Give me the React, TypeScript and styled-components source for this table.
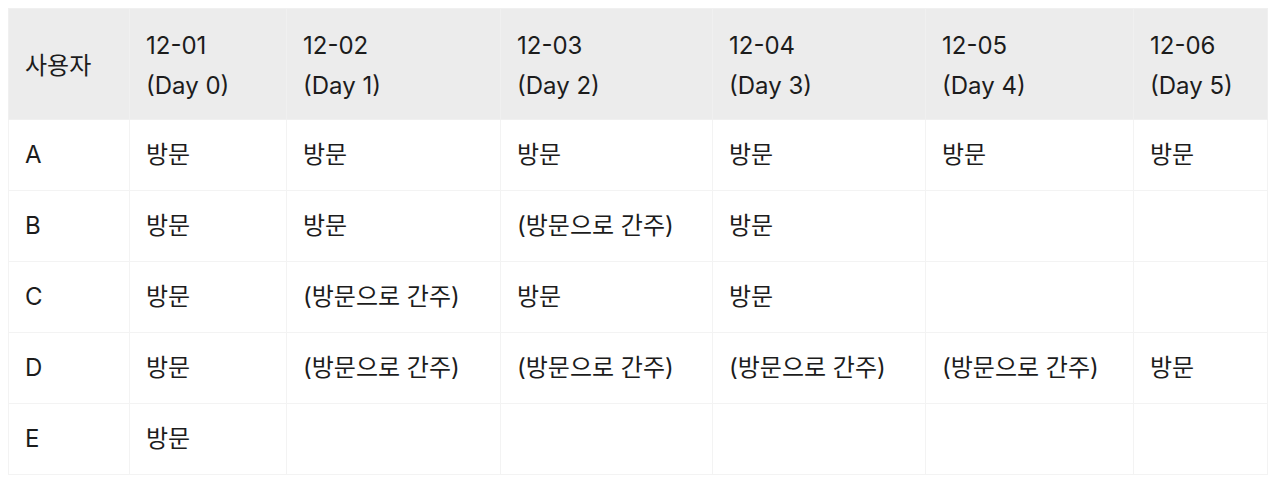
import React from 'react';
import styled, { createGlobalStyle } from 'styled-components';

const GlobalStyle = createGlobalStyle`
  body {
    margin: 8px;
    background: #ffffff;
    font-family: Inter, 'Noto Sans CJK KR', 'Noto Sans', sans-serif;
    color: #1c1c1c;
  }
`;

const columns = [121, 157, 214, 212, 213, 208, 134];

const headers = [
  ['사용자'],
  ['12-01', '(Day 0)'],
  ['12-02', '(Day 1)'],
  ['12-03', '(Day 2)'],
  ['12-04', '(Day 3)'],
  ['12-05', '(Day 4)'],
  ['12-06', '(Day 5)'],
];

const V = '방문';
const C = '(방문으로 간주)';

const rows: string[][] = [
  ['A', V, V, V, V, V, V],
  ['B', V, V, C, V, '', ''],
  ['C', V, C, V, V, '', ''],
  ['D', V, C, C, C, C, V],
  ['E', V, '', '', '', '', ''],
];

const App: React.FC = () => {
  return (
    <>
      <GlobalStyle />
      <Table>
        <colgroup>
          {columns.map((w, i) => (
            <col key={i} style={{ width: w }} />
          ))}
        </colgroup>
        <thead>
          <tr>
            {headers.map((lines, i) => (
              <HeadCell key={i}>
                {lines.map((l, j) => (
                  <Line key={j}>{l}</Line>
                ))}
              </HeadCell>
            ))}
          </tr>
        </thead>
        <tbody>
          {rows.map((row, i) => (
            <tr key={i}>
              {row.map((cell, j) => (
                <Cell key={j}>{cell}</Cell>
              ))}
            </tr>
          ))}
        </tbody>
      </Table>
    </>
  );
};

const Table = styled.table`
  border-collapse: collapse;
  table-layout: fixed;
  width: 1259px;
  font-size: 24px;
  line-height: 40px;
`;

const HeadCell = styled.th`
  background: #ececec;
  border: 1px solid #f0f0f0;
  padding: 17px 16px 13px;
  height: 80px;
  text-align: left;
  font-weight: 400;
  vertical-align: middle;
`;

const Line = styled.div`
  white-space: nowrap;
`;

const Cell = styled.td`
  border: 1px solid #f3f3f3;
  padding: 15px 16px;
  height: 40px;
  white-space: nowrap;
  vertical-align: middle;
`;

export default App;
